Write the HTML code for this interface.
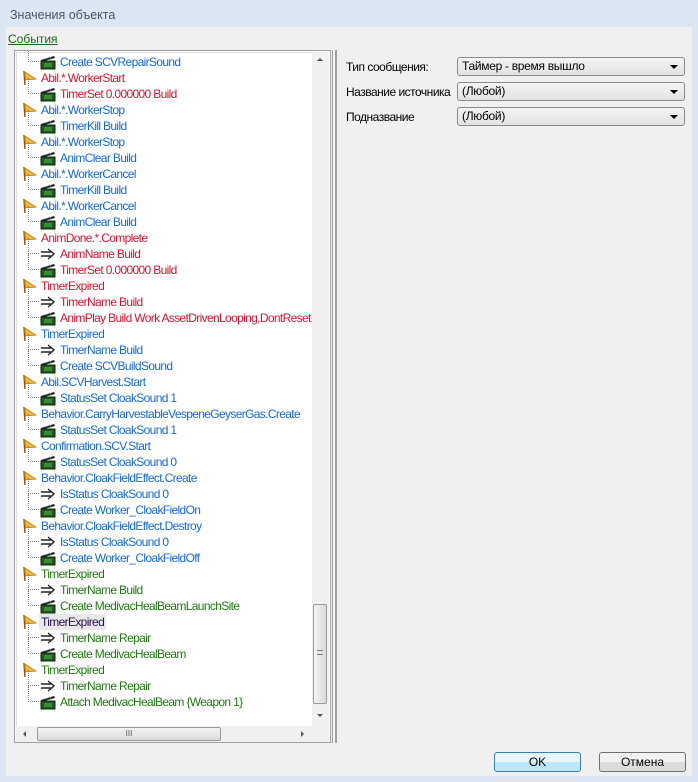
<!DOCTYPE html>
<html><head><meta charset="utf-8"><style>
*{margin:0;padding:0;box-sizing:border-box}
body{width:698px;height:782px;background:#dbe6f3;font-family:"Liberation Sans",sans-serif;font-size:12px;position:relative;overflow:hidden}
.title{position:absolute;left:10px;top:8px;color:#4a5560;font-size:12.5px}
.client{position:absolute;left:6px;top:27px;width:686px;height:749px;background:#f0f0f0}
.ev{position:absolute;left:8px;top:32px;color:#1a6b1a;text-decoration:underline;font-size:12px}
.tree{position:absolute;left:14px;top:50px;width:317px;height:693px;border:1px solid #a0a0a0;background:#fff;overflow:hidden}
.tree2{position:absolute;left:1px;top:1px;right:1px;bottom:1px;border:1px solid #e0e0e0}
.row{position:absolute;height:16px;line-height:16px;white-space:nowrap;letter-spacing:-0.65px}
.b{color:#1668d8}.r{color:#e0102a}.g{color:#1f7a10}
.vs{position:absolute;left:297px;top:1px;width:17px;height:674px;background:#f0f0f0}
.hs{position:absolute;left:1px;top:675px;width:296px;height:16px;background:#f0f0f0}
.sp{position:absolute;left:332px;top:50px;width:5px;height:693px;border-left:1px solid #a0a0a0;border-right:2px solid #a0a0a0;background:#f8f8f8}
.lbl{position:absolute;left:346px;color:#000;font-size:12px;letter-spacing:-0.5px}
.dd{position:absolute;left:457px;width:228px;height:19px;border:1px solid #8a8a8a;border-radius:3px;background:linear-gradient(#f4f4f4,#e2e2e2);padding-left:4px;line-height:17px;font-size:12px;letter-spacing:-0.3px}
.dd:after{content:"";position:absolute;right:6px;top:7px;border:4px solid transparent;border-top:4px solid #000;border-bottom:0}
.btn{position:absolute;top:752px;width:87px;height:20px;border:1px solid #707070;border-radius:3px;background:linear-gradient(#f2f2f2 50%,#dcdcdc 50%);text-align:center;line-height:18px;font-size:12px}
.dot{position:absolute;border-left:1px dotted #808080;border-bottom:1px dotted #808080}
</style></head><body>
<svg width="0" height="0" style="position:absolute"><defs>
<symbol id="flag" viewBox="0 0 16 16"><path d="M2 1 L3 15" stroke="#8a5a10" stroke-width="1.5"/><path d="M2.5 2 C6 3 8 6 14 9 C10 10 7 9 3.5 10 Z" fill="#f3b83a" stroke="#c07a10" stroke-width="0.8"/></symbol>
<symbol id="clap" viewBox="0 0 16 16"><rect x="1" y="7" width="14" height="8" fill="#1e5a1e" stroke="#0a2a0a"/><rect x="4" y="9" width="8" height="4" fill="#3a8a3a"/><path d="M1 6 L14 2 L15 4 L2 7.5 Z" fill="#222"/><path d="M4 5 L5 3.5 M7 4.3 L8 3 M10 3.5 L11 2.3" stroke="#ddd" stroke-width="1"/></symbol>
<symbol id="arr" viewBox="0 0 16 16"><path d="M1 6 H11 M1 10 H11 M8 3 L14 8 L8 13" fill="none" stroke="#222" stroke-width="1.4"/></symbol>
</defs></svg>
<div class="title">Значения объекта</div>
<div class="client"></div>
<div class="ev">События</div>
<div class="tree"><div class="tree2"></div>
<div id="rows"></div>
<div class="vs">
<div style="position:absolute;left:5px;top:6px;border:3px solid transparent;border-bottom:3px solid #555;border-top:0"></div>
<div style="position:absolute;left:1px;top:552px;width:14px;height:100px;border:1px solid #9a9a9a;border-radius:2px;background:linear-gradient(90deg,#f4f4f4,#dadada)"></div>
<div style="position:absolute;left:5px;top:598px;width:6px;height:5px;border-top:1px solid #777;border-bottom:1px solid #777"></div>
<div style="position:absolute;left:5px;top:662px;border:3px solid transparent;border-top:3px solid #555;border-bottom:0"></div>
</div>
<div class="hs">
<div style="position:absolute;left:7px;top:5px;border:3px solid transparent;border-right:3px solid #555;border-left:0"></div>
<div style="position:absolute;left:21px;top:1px;width:184px;height:14px;border:1px solid #9a9a9a;border-radius:2px;background:linear-gradient(#f4f4f4,#dadada);text-align:center;font-size:8px;line-height:12px;color:#555">III</div>
<div style="position:absolute;left:285px;top:5px;border:3px solid transparent;border-left:3px solid #555;border-right:0"></div>
</div>
<div style="position:absolute;left:297px;top:675px;width:17px;height:16px;background:#f0f0f0"></div>
</div>
<div class="sp"></div>
<div class="lbl" style="top:60px">Тип сообщения:</div>
<div class="lbl" style="top:85px">Название источника</div>
<div class="lbl" style="top:110px">Подназвание</div>
<div class="dd" style="top:57px">Таймер - время вышло</div>
<div class="dd" style="top:82px">(Любой)</div>
<div class="dd" style="top:107px">(Любой)</div>
<div class="btn" style="left:494px;border-color:#3c7fb1;background:linear-gradient(#eaf6fd 50%,#bee6fd 50%)">OK</div>
<div class="btn" style="left:599px">Отмена</div>
<script>
var R=[
[0,'c','b','Create SCVRepairSound'],[1,'f','r','Abil.*.WorkerStart'],[0,'c','r','TimerSet 0.000000 Build'],
[1,'f','b','Abil.*.WorkerStop'],[0,'c','b','TimerKill Build'],[1,'f','b','Abil.*.WorkerStop'],[0,'c','b','AnimClear Build'],
[1,'f','b','Abil.*.WorkerCancel'],[0,'c','b','TimerKill Build'],[1,'f','b','Abil.*.WorkerCancel'],[0,'c','b','AnimClear Build'],
[1,'f','r','AnimDone.*.Complete'],[0,'a','r','AnimName Build'],[0,'c','r','TimerSet 0.000000 Build'],
[1,'f','r','TimerExpired'],[0,'a','r','TimerName Build'],[0,'c','r','AnimPlay Build Work AssetDrivenLooping,DontResetI'],
[1,'f','b','TimerExpired'],[0,'a','b','TimerName Build'],[0,'c','b','Create SCVBuildSound'],
[1,'f','b','Abil.SCVHarvest.Start'],[0,'c','b','StatusSet CloakSound 1'],
[1,'f','b','Behavior.CarryHarvestableVespeneGeyserGas.Create'],[0,'c','b','StatusSet CloakSound 1'],
[1,'f','b','Confirmation.SCV.Start'],[0,'c','b','StatusSet CloakSound 0'],
[1,'f','b','Behavior.CloakFieldEffect.Create'],[0,'a','b','IsStatus CloakSound 0'],[0,'c','b','Create Worker_CloakFieldOn'],
[1,'f','b','Behavior.CloakFieldEffect.Destroy'],[0,'a','b','IsStatus CloakSound 0'],[0,'c','b','Create Worker_CloakFieldOff'],
[1,'f','g','TimerExpired'],[0,'a','g','TimerName Build'],[0,'c','g','Create MedivacHealBeamLaunchSite'],
[1,'f','s','TimerExpired'],[0,'a','g','TimerName Repair'],[0,'c','g','Create MedivacHealBeam'],
[1,'f','g','TimerExpired'],[0,'a','g','TimerName Repair'],[0,'c','g','Attach MedivacHealBeam {Weapon 1}']];
var h='';
R.forEach(function(r,i){var t=3+16*i;
if(r[0]){h+='<svg style="position:absolute;left:7px;top:'+(t)+'px" width="16" height="16"><use href="#flag"/></svg>';
 var st=r[2]=='s'?'background:#e8e8e8;color:#2a1050;padding:0 2px;left:24px':'left:26px';
 h+='<div class="row '+r[2]+'" style="top:'+t+'px;'+st+'">'+r[3]+'</div>';}
else{h+='<div class="dot" style="left:13px;top:'+(t-8)+'px;width:11px;height:16px"></div>';
 h+='<svg style="position:absolute;left:25px;top:'+t+'px" width="16" height="16"><use href="#'+(r[1]=='c'?'clap':'arr')+'"/></svg>';
 h+='<div class="row '+r[2]+'" style="top:'+t+'px;left:45px">'+r[3]+'</div>';}
});
document.getElementById('rows').innerHTML=h;
</script>
</body></html>
